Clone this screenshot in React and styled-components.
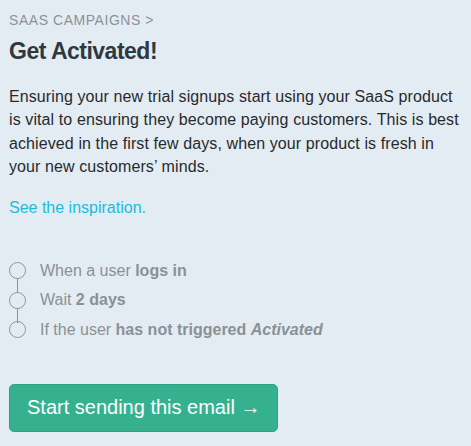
import styled, { createGlobalStyle } from 'styled-components';

const GlobalStyle = createGlobalStyle`
  html, body {
    margin: 0;
    padding: 0;
    background-color: #e4ecf3;
  }
  body {
    font-family: 'Liberation Sans', Arial, sans-serif;
  }
`;

const steps = [
  { id: 1, parts: [['When a user ', 'plain'], ['logs in', 'bold']] },
  { id: 2, parts: [['Wait ', 'plain'], ['2 days', 'bold']] },
  {
    id: 3,
    parts: [
      ['If the user ', 'plain'],
      ['has not triggered ', 'bold'],
      ['Activated', 'italic'],
    ],
  },
];

export default function App() {
  return (
    <>
      <GlobalStyle />
      <Page>
        <Breadcrumb>SAAS CAMPAIGNS &gt;</Breadcrumb>
        <Title>Get Activated!</Title>
        <Description>
          Ensuring your new trial signups start using your SaaS product is vital
          to ensuring they become paying customers. This is best achieved in the
          first few days, when your product is fresh in your new customers’
          minds.
        </Description>
        <InspirationLink href="#">See the inspiration.</InspirationLink>
        <StepList>
          {steps.map((step, i) => (
            <Step key={step.id} last={i === steps.length - 1}>
              <StepCircle />
              <StepText>
                {step.parts.map(([text, kind]) =>
                  kind === 'bold' ? (
                    <strong key={text}>{text}</strong>
                  ) : kind === 'italic' ? (
                    <Em key={text}>{text}</Em>
                  ) : (
                    <span key={text}>{text}</span>
                  )
                )}
              </StepText>
            </Step>
          ))}
        </StepList>
        <StartButton>Start sending this email →</StartButton>
      </Page>
    </>
  );
}

const Page = styled.div`
  display: flex;
  flex-direction: column;
  align-items: flex-start;
  padding: 10px 9px 14px 9px;
  min-height: 446px;
  box-sizing: border-box;
`;

const Breadcrumb = styled.div`
  font-size: 14px;
  line-height: 18px;
  color: #8b9297;
  letter-spacing: 0.55px;
  margin-top: 1px;
`;

const Title = styled.h1`
  margin: 8px 0 0 0;
  font-size: 23px;
  line-height: 28px;
  font-weight: 600;
  color: #2d393f;
  letter-spacing: -0.5px;
`;

const Description = styled.p`
  margin: 20px 0 0 0;
  font-size: 16px;
  line-height: 23.3px;
  letter-spacing: 0.1px;
  color: #272a2c;
`;

const InspirationLink = styled.a`
  margin-top: 20px;
  font-size: 16px;
  line-height: 20px;
  color: #19bcda;
  text-decoration: none;
`;

const StepList = styled.ul`
  list-style: none;
  margin: 38px 0 0 0;
  padding: 0;
  display: flex;
  flex-direction: column;
`;

const Step = styled.li`
  position: relative;
  display: flex;
  align-items: center;
  gap: 14px;
  height: 29.5px;
  &::after {
    content: '';
    display: ${p => (p.last ? 'none' : 'block')};
    position: absolute;
    left: 7.5px;
    top: 22px;
    width: 1px;
    height: 15px;
    background-color: #8d959a;
  }
`;

const StepCircle = styled.span`
  width: 15px;
  height: 15px;
  border: 1px solid #8d959a;
  border-radius: 50%;
  flex-shrink: 0;
`;

const StepText = styled.span`
  font-size: 16px;
  color: #8a9196;
  strong {
    font-weight: 700;
  }
`;

const Em = styled.em`
  font-weight: 700;
  font-style: italic;
`;

const StartButton = styled.button`
  margin-top: 39px;
  height: 48px;
  padding: 0 17px;
  font-family: 'Liberation Sans', Arial, sans-serif;
  font-size: 20px;
  color: #ffffff;
  background-color: #36b190;
  border: 1px solid #2fa283;
  border-radius: 5px;
  cursor: pointer;
`;
